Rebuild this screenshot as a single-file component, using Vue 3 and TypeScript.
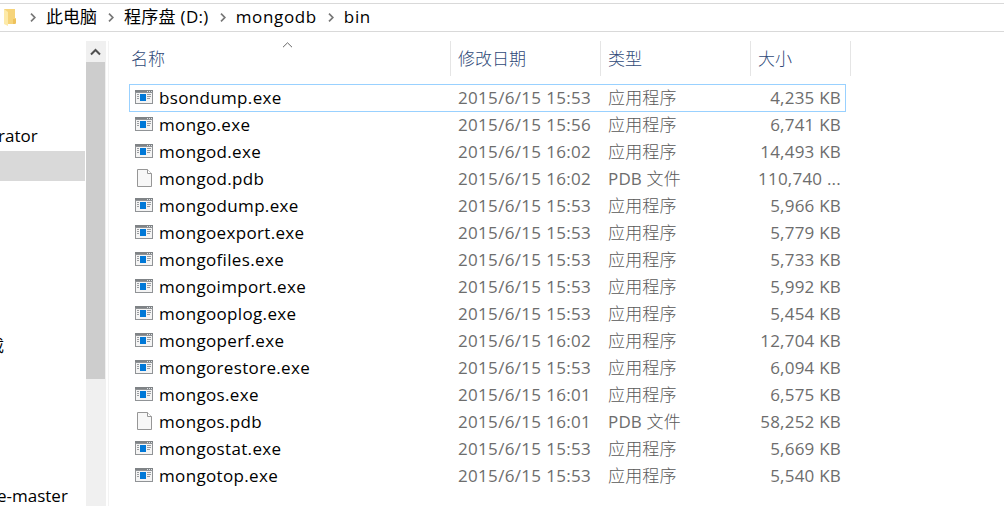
<script setup lang="ts">
interface FileEntry {
  name: string
  modified: string
  size: string
}

const crumbs: string[] = ['此电脑', '程序盘 (D:)', 'mongodb', 'bin']

const files: FileEntry[] = [
  { name: 'bsondump.exe', modified: '2015/6/15 15:53', size: '4,235 KB' },
  { name: 'mongo.exe', modified: '2015/6/15 15:56', size: '6,741 KB' },
  { name: 'mongod.exe', modified: '2015/6/15 16:02', size: '14,493 KB' },
  { name: 'mongod.pdb', modified: '2015/6/15 16:02', size: '110,740 ...' },
  { name: 'mongodump.exe', modified: '2015/6/15 15:53', size: '5,966 KB' },
  { name: 'mongoexport.exe', modified: '2015/6/15 15:53', size: '5,779 KB' },
  { name: 'mongofiles.exe', modified: '2015/6/15 15:53', size: '5,733 KB' },
  { name: 'mongoimport.exe', modified: '2015/6/15 15:53', size: '5,992 KB' },
  { name: 'mongooplog.exe', modified: '2015/6/15 15:53', size: '5,454 KB' },
  { name: 'mongoperf.exe', modified: '2015/6/15 16:02', size: '12,704 KB' },
  { name: 'mongorestore.exe', modified: '2015/6/15 15:53', size: '6,094 KB' },
  { name: 'mongos.exe', modified: '2015/6/15 16:01', size: '6,575 KB' },
  { name: 'mongos.pdb', modified: '2015/6/15 16:01', size: '58,252 KB' },
  { name: 'mongostat.exe', modified: '2015/6/15 15:53', size: '5,669 KB' },
  { name: 'mongotop.exe', modified: '2015/6/15 15:53', size: '5,540 KB' },
]

const isExe = (f: FileEntry): boolean => f.name.endsWith('.exe')
</script>

<template>
  <div class="explorer">
    <nav class="address">
      <svg class="folder" width="16" height="18" viewBox="0 0 16 18">
        <path d="M4 0H15V9H16V14L15 15H4Z" fill="#f6d47a" />
        <path d="M13 10H16V14L15 15H13Z" fill="#eec25c" />
        <path d="M4 0L8 3V17L4 15Z" fill="#fdeaa9" />
      </svg>
      <template v-for="crumb in crumbs" :key="crumb">
        <svg class="sep" width="6" height="9" viewBox="0 0 6 9">
          <path d="M1 .7L4.8 4.5L1 8.3" fill="none" stroke="#777" stroke-width="1.7" />
        </svg>
        <span class="crumb">{{ crumb }}</span>
      </template>
    </nav>

    <div class="body">
      <aside class="tree">
        <div class="node first">rator</div>
        <div class="node selected"></div>
        <div class="node downloads"><span>下载</span></div>
        <div class="node last">e-master</div>
      </aside>
      <div class="scrollbar">
        <div class="up">
          <svg width="11" height="8" viewBox="0 0 11 8">
            <path d="M1 6.5L5.5 2L10 6.5" fill="none" stroke="#505050" stroke-width="2" />
          </svg>
        </div>
        <div class="thumb"></div>
      </div>

      <main class="list">
        <div class="header">
          <div class="col name">
            名称
            <svg class="sort" width="11" height="6" viewBox="0 0 11 6">
              <path d="M1 5.2L5.5 .8L10 5.2" fill="none" stroke="#666" stroke-width="1" />
            </svg>
          </div>
          <div class="col">修改日期</div>
          <div class="col">类型</div>
          <div class="col size">大小</div>
        </div>
        <div v-for="(file, i) in files" :key="file.name" class="row" :class="{ focused: i === 0 }">
          <div class="icon">
            <svg v-if="isExe(file)" width="18" height="14" viewBox="0 0 18 14" shape-rendering="crispEdges">
              <rect width="18" height="14" fill="#909396" />
              <rect width="18" height="2" fill="#7f8386" />
              <rect x="1" y="3" width="16" height="10" fill="#f4f4f4" />
              <path d="M12 1.5h1M14 1.5h1M16 1.5h1" stroke="#dfe3e6" />
              <path d="M2 4.5h2M2 6.5h2M2 8.5h2M12 4.5h4M12 6.5h4M12 8.5h3" stroke="#9a9da0" />
              <rect x="5" y="4" width="6" height="7" fill="#0078d7" />
            </svg>
            <svg v-else class="doc" width="15" height="18" viewBox="0 0 15 18">
              <path d="M.5 .5H10.5L14.5 4.5V17.5H.5Z" fill="#f7f7f7" stroke="#969696" />
              <path d="M10.5 .5V4.5H14.5" fill="#fff" stroke="#969696" />
            </svg>
          </div>
          <div class="filename">{{ file.name }}</div>
          <div class="date">{{ file.modified }}</div>
          <div class="type">
            <template v-if="isExe(file)"><span class="han">应用程序</span></template>
            <template v-else>PDB <span class="han">文件</span></template>
          </div>
          <div class="filesize">{{ file.size }}</div>
        </div>
      </main>
    </div>
  </div>
</template>

<style>
body {
  margin: 0;
  background: #fff;
}
</style>

<style scoped>
.explorer {
  box-sizing: border-box;
  width: 1004px;
  height: 506px;
  padding-top: 3px;
  overflow: hidden;
  background: #fff;
  color: #000;
  font: 17px/27px "Open Sans", "Noto Sans CJK SC", sans-serif;
  white-space: nowrap;
}
.address {
  box-sizing: border-box;
  height: 29px;
  border-top: 1px solid #d9d9d9;
  border-bottom: 1px solid #d9d9d9;
  display: flex;
  align-items: center;
}
.folder {
  margin-right: 14px;
}
.sep {
  flex: none;
  margin-right: 10px;
}
.crumb {
  margin-right: 11px;
  padding-bottom: 2px;
}
.crumb:nth-of-type(2) {
  letter-spacing: 0.3px;
}
.crumb:nth-of-type(n + 3) {
  letter-spacing: 0.65px;
}
.body {
  display: flex;
  height: 474px;
}
.tree {
  width: 86px;
  overflow: hidden;
}
.node {
  height: 30px;
  line-height: 30px;
}
.first {
  margin-top: 89px;
  text-indent: -2px;
}
.selected {
  width: 85px;
  background: #d9d9d9;
}
.downloads {
  width: 4px;
  margin-top: 150px;
  display: flex;
  justify-content: flex-end;
}
.last {
  margin-top: 120px;
  text-indent: -3px;
}
.scrollbar {
  width: 20px;
  margin-top: 9px;
  background: #f0f0f0;
}
.up {
  height: 21px;
  display: flex;
  align-items: center;
  padding-left: 4px;
}
.thumb {
  width: 19px;
  height: 317px;
  background: #cdcdcd;
}
.list {
  margin: 9px 0 0 2px;
  border-left: 1px solid #f3f3f3;
  padding-left: 20px;
}
.header {
  display: flex;
  height: 35px;
  margin-bottom: 8px;
  line-height: 33px;
  color: #2f4a78;
  font-family: "Noto Sans CJK SC", sans-serif;
  font-weight: 300;
}
.col {
  box-sizing: border-box;
  position: relative;
  width: 150px;
  padding-left: 7px;
  border-right: 1px solid #e5e5e5;
}
.col.name {
  width: 322px;
  padding-left: 2px;
}
.col.size {
  width: 100px;
}
.sort {
  position: absolute;
  left: 153px;
  top: 1px;
}
.row {
  position: relative;
  width: 717px;
  height: 27px;
  display: flex;
  align-items: center;
  color: #6d6d6d;
}
.focused::after {
  content: "";
  position: absolute;
  inset: 0 0 -1px;
  border: 1px solid #99d1ff;
}
.icon {
  width: 30px;
  padding: 0 0 1px 6px;
  box-sizing: border-box;
  display: flex;
}
.doc {
  margin-left: 2px;
}
.filename {
  width: 299px;
  color: #000;
  letter-spacing: 0.34px;
}
.date {
  width: 150px;
  letter-spacing: 0.32px;
}
.type {
  width: 132px;
  letter-spacing: 0.15px;
}
.han {
  font-weight: 300;
  color: #585858;
}
.filesize {
  width: 101px;
  text-align: right;
  letter-spacing: 0.22px;
}
</style>
